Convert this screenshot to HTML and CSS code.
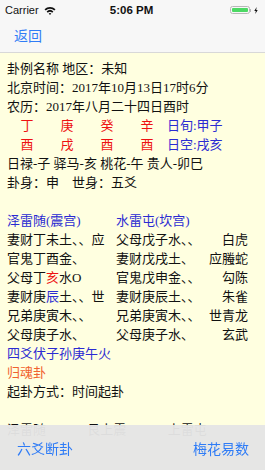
FILE: index.html
```html
<!DOCTYPE html>
<html lang="zh">
<head>
  <meta charset="UTF-8" />
  <meta name="viewport" content="width=device-width, initial-scale=1.0"/>
  <title>六爻排盘</title>
  <link rel="stylesheet" href="styles.css">
</head>
<body>
  <div class="status">
    <div class="carrier">
      Carrier
      <svg class="wifi" width="12" height="9" viewBox="0 0 12 9">
        <path d="M0.5 3.2 A8 8 0 0 1 11.5 3.2 L10.3 4.5 A6.2 6.2 0 0 0 1.7 4.5 Z" fill="#111"/>
        <path d="M2.6 5.4 A5 5 0 0 1 9.4 5.4 L8.2 6.7 A3.2 3.2 0 0 0 3.8 6.7 Z" fill="#111"/>
        <path d="M4.7 7.6 A2 2 0 0 1 7.3 7.6 L6 9 Z" fill="#111"/>
      </svg>
    </div>
    <div class="time">5:06 PM</div>
    <div class="battery">
      <span class="cell"><span class="level"></span></span>
      <span class="nub"></span>
      <svg class="bolt" width="4" height="7" viewBox="0 0 4 7">
        <path d="M2.6 0 L0.3 4 L1.8 4 L1.3 7 L3.7 2.9 L2.2 2.9 Z" fill="#111"/>
      </svg>
    </div>
  </div>

  <div class="navbar">
    <a href="#" class="back">返回</a>
  </div>

  <div class="content">
    <div class="line">卦例名称 地区：未知</div>
    <div class="line">北京时间：2017年10月13日17时6分</div>
    <div class="line">农历：2017年八月二十四日酉时</div>
    <div class="line pillars">
      <span class="gz">丁</span><span class="gz">庚</span><span class="gz">癸</span><span class="gz">辛</span><span class="blue">日旬:甲子</span>
    </div>
    <div class="line pillars">
      <span class="gz">酉</span><span class="gz">戌</span><span class="gz">酉</span><span class="gz">酉</span><span class="blue">日空:戌亥</span>
    </div>
    <div class="line">日禄-子 驿马-亥 桃花-午 贵人-卯巳</div>
    <div class="line">卦身：申　世身：五爻</div>
    <div class="line"></div>

    <div class="line yao blue">
      <span>泽雷随(震宫)</span><span>水雷屯(坎宫)</span>
    </div>
    <div class="line yao">
      <span>妻财丁未土、、应</span>
      <span class="right"><span>父母戊子水、、</span><span>白虎</span></span>
    </div>
    <div class="line yao">
      <span>官鬼丁酉金、</span>
      <span class="right"><span>妻财戊戌土、</span><span>应螣蛇</span></span>
    </div>
    <div class="line yao">
      <span>父母丁<span class="red">亥</span>水O</span>
      <span class="right"><span>官鬼戊申金、、</span><span>勾陈</span></span>
    </div>
    <div class="line yao">
      <span>妻财庚<span class="blue">辰</span>土、、世</span>
      <span class="right"><span>妻财庚辰土、、</span><span>朱雀</span></span>
    </div>
    <div class="line yao">
      <span>兄弟庚寅木、、</span>
      <span class="right"><span>兄弟庚寅木、、</span><span>世青龙</span></span>
    </div>
    <div class="line yao">
      <span>父母庚子水、</span>
      <span class="right"><span>父母庚子水、</span><span>玄武</span></span>
    </div>
    <div class="line blue">四爻伏子孙庚午火</div>
    <div class="line orange">归魂卦</div>
    <div class="line">起卦方式：时间起卦</div>
    <div class="line"></div>
    <div class="line under">
      <span>泽雷随</span><span>艮上震</span><span>上雷屯</span>
    </div>
  </div>

  <div class="toolbar">
    <a href="#">六爻断卦</a>
    <a href="#">梅花易数</a>
  </div>
</body>
</html>
```

FILE: styles.css
```css
* {
  margin: 0;
  padding: 0;
  box-sizing: border-box;
}

body {
  width: 265px;
  height: 470px;
  overflow: hidden;
  background: #ffffe0;
  font-family: "Liberation Serif", "Noto Sans CJK SC", serif;
  color: #111;
}

a {
  text-decoration: none;
  color: #2f7cf6;
}

.status {
  height: 20px;
  background: #f7f7f7;
  display: flex;
  align-items: center;
  justify-content: space-between;
  padding: 0 7px 0 5px;
  font-family: "Liberation Sans", sans-serif;
  font-size: 11px;
  position: relative;
}

.carrier {
  display: flex;
  align-items: center;
  gap: 5px;
  width: 60px;
}

.time {
  font-weight: bold;
  font-size: 11.5px;
}

.battery {
  display: flex;
  align-items: center;
  width: 60px;
  justify-content: flex-end;
}

.cell {
  width: 20px;
  height: 8px;
  border: 1px solid #b8b8b8;
  border-radius: 2.5px;
  padding: 1px;
  display: flex;
}

.level {
  flex: 1;
  background: #4cd964;
  border-radius: 1px;
}

.nub {
  width: 1.5px;
  height: 3px;
  background: #b8b8b8;
  margin-right: 3px;
}

.navbar {
  height: 33px;
  background: #f7f7f7;
  border-bottom: 1px solid #d8d8d8;
  display: flex;
  align-items: center;
  padding: 0 14px 2px;
  font-family: "Noto Sans CJK SC", sans-serif;
  font-size: 14px;
}

.content {
  padding: 6px 17px 0 7px;
  font-size: 13px;
}

.line {
  height: 19px;
  line-height: 19px;
  white-space: nowrap;
}

.pillars {
  display: flex;
}

.gz {
  width: 40px;
  text-align: center;
  color: #ee1111;
}

.blue {
  color: #2b2bd2;
}

.red {
  color: #ee1111;
}

.orange {
  color: #f0622e;
}

.yao {
  display: grid;
  grid-template-columns: 109px 1fr;
}

.yao .right {
  display: flex;
  justify-content: space-between;
}

.under {
  display: flex;
  gap: 0;
}

.under span {
  width: 90px;
}

.toolbar {
  position: fixed;
  left: 0;
  right: 0;
  bottom: 0;
  height: 45px;
  background: rgba(229, 229, 229, 0.96);
  display: flex;
  align-items: center;
  justify-content: space-between;
  padding: 0 16px 0 17px;
  font-family: "Noto Sans CJK SC", sans-serif;
  font-size: 14px;
}
```
